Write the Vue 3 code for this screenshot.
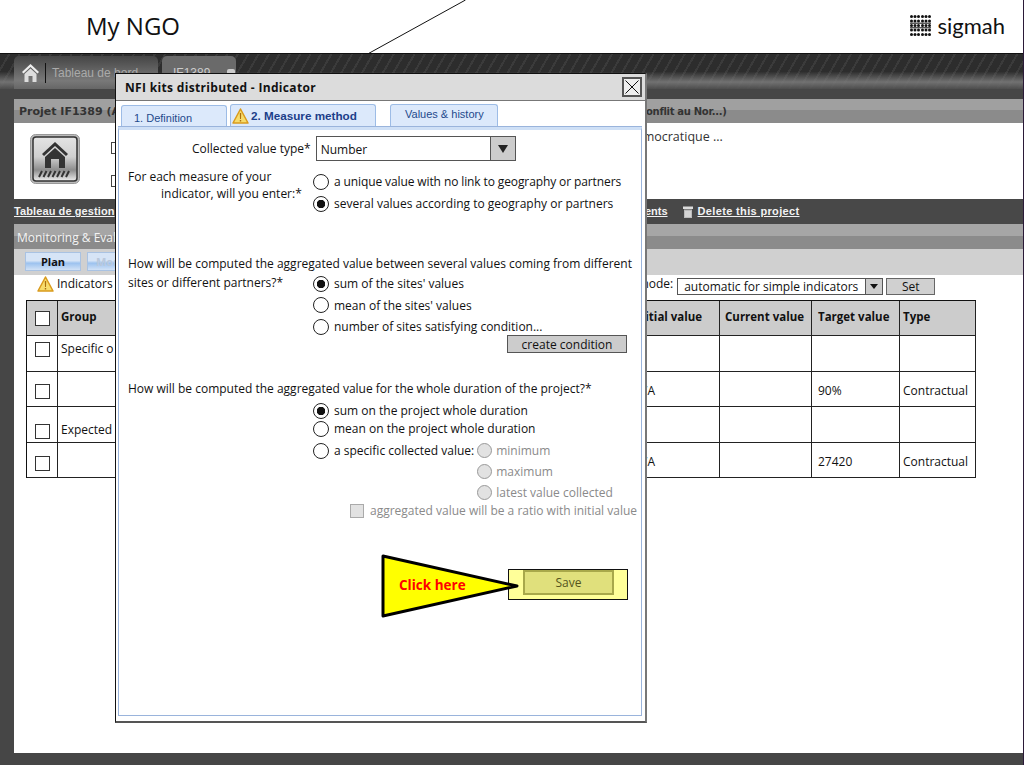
<script setup>
const columns = ['Group', 'Initial value', 'Current value', 'Target value', 'Type'];

const rows = [
  { group: 'Specific o', initial: '', target: '', type: '', top: 4, boxTop: 6 },
  { group: '', initial: 'N/A', target: '90%', type: 'Contractual', top: 10, boxTop: 12 },
  { group: 'Expected', initial: '', target: '', type: '', top: 14, boxTop: 17 },
  { group: '', initial: 'N/A', target: '27420', type: 'Contractual', top: 10, boxTop: 13 },
];

const entryOptions = [
  { label: 'a unique value with no link to geography or partners', checked: false },
  { label: 'several values according to geography or partners', checked: true },
];

const siteOptions = [
  { label: "sum of the sites' values", checked: true },
  { label: "mean of the sites' values", checked: false },
  { label: 'number of sites satisfying condition...', checked: false },
];

const durationOptions = [
  { label: 'sum on the project whole duration', checked: true },
  { label: 'mean on the project whole duration', checked: false },
];

const specificOptions = ['minimum', 'maximum', 'latest value collected'];

const logoCols = [1.5, 5, 8.5, 12.5, 16, 19.5];
const logoRows = [1.5, 6, 10.5, 15, 19.5];
</script>

<template>
  <div class="page">
    <header class="top">
      <div class="ngo">My NGO</div>
      <div class="logo">
        <svg width="21" height="21" viewBox="0 0 21 21">
          <g fill="#111">
            <template v-for="x in logoCols" :key="x">
              <circle v-for="y in logoRows" :key="y" :cx="x" :cy="y" r="1.500" />
            </template>
          </g>
          <path d="M0 8.200h21M0 12.800h21" stroke="#111" stroke-width="1" />
        </svg>
        <span>sigmah</span>
      </div>
    </header>

    <nav class="nav">
      <div class="nav-tab home-tab">
        <svg width="17" height="18" viewBox="0 0 17 18">
          <path d="M8.500 0 0 8l1.500 1.500 7-6.500 7 6.500L17 8z" fill="#eee" />
          <path d="M2.500 10 8.500 4.500 14.500 10v8H10.500v-6h-4v6h-4z" fill="#ddd" />
        </svg>
        <i class="nav-sep"></i>
        <span>Tableau de bord</span>
      </div>
      <div class="nav-tab project-tab">
        <span>IF1389</span>
        <i class="tab-x"></i>
      </div>
    </nav>

    <main class="content">
      <div class="project-title">
        <span class="title-start">Projet IF1389 (Ai</span>
        <span class="title-end">onflit au Nor...)</span>
      </div>

      <section class="project-info">
        <svg class="project-icon" width="50" height="50" viewBox="0 0 50 50">
          <defs>
            <linearGradient id="iconBg" x1="0" y1="0" x2="0" y2="1">
              <stop offset="0" stop-color="#e4e4e4" />
              <stop offset="0.45" stop-color="#d0d0d0" />
              <stop offset="0.75" stop-color="#8d8d8d" />
              <stop offset="1" stop-color="#eee" />
            </linearGradient>
          </defs>
          <rect x="0.500" y="0.500" width="49" height="49" rx="5" fill="#bbb" stroke="#999" />
          <rect x="3" y="3" width="44" height="44" rx="3" fill="url(#iconBg)" stroke="#333" stroke-width="1.500" />
          <path d="M25 8 12 20l2 2 11-10 11 10 2-2z" fill="#333" />
          <path d="M15 23 25 14l10 9v11H29V25h-8v9h-6z" fill="#333" />
          <path d="M9 43l3-6M13.500 43l3-6M18 43l3-6M22.500 43l3-6M27 43l3-6M31.500 43l3-6M36 43l3-6" stroke="#333" stroke-width="2" />
        </svg>
        <div class="info-labels">
          <i></i>
          <i></i>
        </div>
        <div class="info-text">démocratique ...</div>
      </section>

      <div class="links">
        <a class="gestion-link">Tableau de gestion</a>
        <a class="docs-link">Documents</a>
        <svg class="trash" width="12" height="13" viewBox="0 0 12 13">
          <path d="M1 1.500h10v2.500H1z" fill="#ddd" />
          <path d="M2 4.500h8V13H2z" fill="#bbb" />
          <path d="M4 6v6M6 6v6M8 6v6" stroke="#eee" />
        </svg>
        <a class="delete-link">Delete this project</a>
      </div>

      <div class="section-title">Monitoring &amp; Eval</div>

      <div class="toolbar">
        <button class="tool-btn active">Plan</button>
        <button class="tool-btn second">Mon</button>
      </div>

      <div class="monitor">
        <div class="filter-row">
          <svg class="warn" width="17" height="16" viewBox="0 0 17 16">
            <path d="M8.500 1 16 15H1z" fill="#f7dc6c" stroke="#d99a1c" stroke-width="1.500" stroke-linejoin="round" />
            <path d="M7.800 5h1.400l-.2 6H8zM7.800 12h1.400v1.500H7.800z" fill="#a96f10" />
          </svg>
          <span class="ind-label">Indicators</span>
          <span class="mode-label">mode:</span>
          <div class="mini-select">
            <span>automatic for simple indicators</span>
            <b></b>
          </div>
          <button class="set-btn">Set</button>
        </div>

        <div class="grid">
          <div class="cell head check-cell"><i class="box"></i></div>
          <div class="cell head" v-for="c in columns" :key="c">{{ c }}</div>
          <template v-for="(r, i) in rows" :key="i">
            <div class="cell check-cell" :style="{ paddingTop: r.boxTop + 'px' }"><i class="box"></i></div>
            <div class="cell" :style="{ paddingTop: r.top + 'px' }">{{ r.group }}</div>
            <div class="cell" :style="{ paddingTop: r.top + 'px' }">{{ r.initial }}</div>
            <div class="cell"></div>
            <div class="cell" :style="{ paddingTop: r.top + 'px' }">{{ r.target }}</div>
            <div class="cell" :style="{ paddingTop: r.top + 'px' }">{{ r.type }}</div>
          </template>
        </div>
      </div>
    </main>

    <svg class="pointer-line" width="110" height="54" viewBox="0 0 110 54">
      <path d="M104.500 0 7.500 53.500" stroke="#111" fill="none" />
    </svg>

    <div class="modal">
      <div class="modal-title">
        <span>NFI kits distributed - Indicator</span>
        <button class="close">
          <svg width="16" height="16" viewBox="0 0 16 16">
            <path d="M1.500 1.500l13 13M14.500 1.500l-13 13" stroke="#111" fill="none" />
          </svg>
        </button>
      </div>

      <div class="tabs">
        <div class="tab first">1. Definition</div>
        <div class="tab current">
          <svg width="17" height="16" viewBox="0 0 17 16">
            <path d="M8.500 1 16 15H1z" fill="#f7dc6c" stroke="#d99a1c" stroke-width="1.500" stroke-linejoin="round" />
            <path d="M7.800 5h1.400l-.2 6H8zM7.800 12h1.400v1.500H7.800z" fill="#a96f10" />
          </svg>
          <span>2. Measure method</span>
        </div>
        <div class="tab last">Values &amp; history</div>
      </div>

      <div class="panel">
        <div class="type-row">
          <label>Collected value type*</label>
          <div class="type-select">
            <span>Number</span>
            <b></b>
          </div>
        </div>

        <div class="entry-row">
          <div class="entry-label">
            <div>For each measure of your</div>
            <div class="entry-second">indicator, will you enter:*</div>
          </div>
          <div class="options tight">
            <div class="radio" v-for="o in entryOptions" :key="o.label">
              <i class="dot" :class="{ on: o.checked }"></i>{{ o.label }}
            </div>
          </div>
        </div>

        <p class="question q-sites">How will be computed the aggregated value between several values coming from different</p>
        <div class="sites-row">
          <div class="sites-label">sites or different partners?*</div>
          <div class="options site-options">
            <div class="radio" v-for="o in siteOptions" :key="o.label">
              <i class="dot" :class="{ on: o.checked }"></i>{{ o.label }}
            </div>
          </div>
        </div>
        <div class="condition-row">
          <button class="gray-btn">create condition</button>
        </div>

        <p class="question q-duration">How will be computed the aggregated value for the whole duration of the project?*</p>
        <div class="options duration">
          <div class="radio short" v-for="o in durationOptions" :key="o.label">
            <i class="dot" :class="{ on: o.checked }"></i>{{ o.label }}
          </div>
          <div class="specific">
            <div class="radio"><i class="dot"></i>a specific collected value:</div>
            <div class="sub-options">
              <div class="radio disabled" v-for="s in specificOptions" :key="s">
                <i class="dot"></i>{{ s }}
              </div>
            </div>
          </div>
        </div>
        <div class="ratio-row">
          <i class="box disabled-box"></i>
          <span>aggregated value will be a ratio with initial value</span>
        </div>
      </div>

      <div class="callout">
        <svg class="callout-arrow" width="140" height="64" viewBox="0 0 140 64">
          <path d="M2 2 136 32 2 62z" fill="#ff0" stroke="#000" stroke-width="3" stroke-linejoin="round" />
        </svg>
        <span class="callout-text">Click here</span>
        <div class="save-mark">
          <button class="save">Save</button>
        </div>
      </div>
    </div>
  </div>
</template>

<style scoped>
.page {
  position: relative;
  width: 1023px;
  height: 765px;
  display: flex;
  flex-direction: column;
  border-right: 1px solid #2b1a38;
  overflow: hidden;
  font-family: "Open Sans", sans-serif;
  color: #111;
}

i {
  display: block;
  font-style: normal;
}

.top {
  height: 53px;
  flex-shrink: 0;
  display: flex;
  justify-content: space-between;
  align-items: flex-start;
  padding-left: 86px;
  padding-right: 18px;
  background: #fff;
  border-bottom: 1px solid #111;
}

.ngo {
  margin-top: 8px;
  font-size: 24px;
  line-height: 36px;
}

.logo {
  display: flex;
  align-items: center;
  gap: 6px;
  margin-top: 15px;
  font-family: Lato, sans-serif;
  font-size: 22px;
  line-height: 21px;
}

.nav {
  height: 35px;
  flex-shrink: 0;
  display: flex;
  align-items: flex-end;
  gap: 4px;
  padding-left: 14px;
  background:
    linear-gradient(180deg, rgba(60, 60, 60, 0) 50%, rgba(125, 125, 125, 0.85) 80%, rgba(80, 80, 80, 0.9) 100%),
    repeating-linear-gradient(120deg, #2d2d2d 0 7px, #3b3b3b 7px 9px);
}

.nav-tab {
  height: 33px;
  box-sizing: border-box;
  display: flex;
  align-items: center;
  border-radius: 5px 5px 0 0;
  font-family: "Liberation Sans", sans-serif;
  font-size: 12px;
}

.home-tab {
  width: 144px;
  padding-left: 8px;
  color: #aaa;
  background:
    linear-gradient(180deg, rgba(70, 70, 70, 0.6), rgba(130, 130, 130, 0.85) 75%, #666),
    #444;
}

.nav-sep {
  width: 1px;
  height: 20px;
  margin: 0 6px;
  background: #111;
}

.project-tab {
  width: 74px;
  padding-left: 11px;
  color: #ccc;
  background: #6a6a6a;
}

.tab-x {
  width: 8px;
  height: 7px;
  margin-left: 17px;
  border-radius: 2px;
  background: #ccc;
}

.content {
  flex: 1;
  display: flex;
  flex-direction: column;
  padding: 10px 0 12px 14px;
  background: #464646;
}

.project-title {
  height: 24px;
  flex-shrink: 0;
  display: flex;
  align-items: center;
  padding: 1px 0 0 5px;
  box-sizing: border-box;
  background: linear-gradient(180deg, #a0a0a0 0 11px, #8b8b8b 11px);
  color: #333;
  font-family: "DejaVu Sans", sans-serif;
  font-size: 11px;
  font-weight: 700;
  white-space: nowrap;
}

.title-start {
  width: 96px;
}

.title-end {
  margin-left: 531px;
  font-size: 10px;
  letter-spacing: -0.3px;
}

.project-info {
  height: 76px;
  flex-shrink: 0;
  display: flex;
  background: #fff;
}

.project-icon {
  margin: 11px 0 0 16px;
}

.info-labels {
  margin: 19px 0 0 31px;
  width: 20px;
}

.info-labels i {
  width: 5px;
  height: 10px;
  margin-bottom: 21px;
  border: 1px solid #444;
}

.info-text {
  margin: 5px 0 0 497px;
  font-size: 12.500px;
  color: #333;
  white-space: nowrap;
}

.links {
  height: 25px;
  flex-shrink: 0;
  display: flex;
  align-items: center;
  padding-bottom: 1px;
  box-sizing: border-box;
  background: #484848;
  color: #f2f2f2;
  font-family: "Liberation Sans", sans-serif;
  font-size: 11px;
  font-weight: 700;
}

.links a {
  text-decoration: underline;
  white-space: nowrap;
}

.gestion-link {
  letter-spacing: 0.1px;
}

.docs-link {
  margin-left: 493px;
}

.trash {
  margin: 0 4px 0 14px;
}

.delete-link {
  letter-spacing: 0.35px;
}

.section-title {
  height: 25px;
  flex-shrink: 0;
  padding-left: 3px;
  background: linear-gradient(180deg, #a6a6a6 0 12px, #8b8b8b 12px);
  color: #f4f4f4;
  font-size: 12px;
  line-height: 27px;
}

.toolbar {
  height: 26px;
  box-sizing: border-box;
  flex-shrink: 0;
  display: flex;
  gap: 6px;
  padding: 3px 0 0 11px;
  background: #d0d0d0;
}

.tool-btn {
  width: 56px;
  height: 19px;
  padding: 0;
  border: 1px solid #a9c2e2;
  background: linear-gradient(180deg, #d6e4f6 0 45%, #9cc2ef 60%, #d2e2f6);
  font-family: "Open Sans", sans-serif;
  font-size: 11px;
  font-weight: 700;
  color: #111;
}

.second {
  text-align: left;
  padding-left: 8px;
  color: #b9c8dc;
}

.monitor {
  flex: 1;
  background: #fff;
  padding-left: 12px;
}

.filter-row {
  height: 25px;
  display: flex;
  align-items: flex-start;
  font-size: 12px;
  line-height: 18px;
}

.warn {
  margin: 1px 0 0 11px;
}

.ind-label {
  margin-left: 3px;
}

.mode-label {
  margin-left: 525px;
}

.mini-select {
  width: 206px;
  height: 17px;
  margin: 3px 0 0 4px;
  box-sizing: border-box;
  display: flex;
  justify-content: space-between;
  border: 1px solid #555;
  padding-left: 6px;
  line-height: 15px;
  font-size: 12px;
}

.mini-select b {
  width: 16px;
  background: #ccc;
  border-left: 1px solid #555;
  position: relative;
}

.mini-select b::after {
  content: "";
  position: absolute;
  left: 4px;
  top: 5px;
  border: 4px solid transparent;
  border-top: 5px solid #111;
}

.set-btn {
  width: 49px;
  height: 17px;
  margin: 3px 0 0 3px;
  padding: 0;
  border: 1px solid #666;
  background: #d0d0d0;
  font-family: "Open Sans", sans-serif;
  font-size: 12px;
  line-height: 14px;
  color: #111;
}

.grid {
  width: 950px;
  box-sizing: border-box;
  display: grid;
  grid-template-columns: 31px 573px 89px 92px 88px 76px;
  grid-auto-rows: 35.400px;
  border-top: 1px solid #111;
  border-left: 1px solid #111;
  font-size: 12px;
}

.cell {
  box-sizing: border-box;
  padding: 3px 0 0 3px;
  border-right: 1px solid #222;
  border-bottom: 1px solid #222;
  white-space: nowrap;
  overflow: hidden;
}

.head {
  padding: 8px 0 0 3px;
  background: #ccc;
  font-size: 11.500px;
  font-weight: 700;
}

.cell:nth-child(6n+4) {
  padding-left: 5px;
}

.cell:nth-child(6n+5) {
  padding-left: 6px;
}

.check-cell {
  padding: 6px 0 0 8px;
}

.head.check-cell {
  padding-top: 10px;
}

.box {
  width: 13px;
  height: 13px;
  border: 1px solid #333;
  background: #fff;
}

.pointer-line {
  position: absolute;
  left: 361px;
  top: 0;
}

/* dialog lies over the page */
.modal {
  position: absolute;
  left: 115px;
  top: 73px;
  width: 529px;
  height: 647px;
  display: flex;
  flex-direction: column;
  background: #fff;
  border: 1px solid #111;
  border-right: 2px solid #777;
  border-bottom: 2px solid #555;
  font-size: 12px;
}

.modal-title {
  height: 26px;
  flex-shrink: 0;
  display: flex;
  justify-content: space-between;
  align-items: center;
  padding: 0 3px 0 9px;
  background: #dcdcdc;
  border-bottom: 1px solid #777;
  font-size: 12px;
  font-weight: 700;
  letter-spacing: 0.33px;
}

.close {
  width: 20px;
  height: 20px;
  padding: 0;
  display: flex;
  align-items: center;
  justify-content: center;
  border: 2px solid #555;
  background: #eee;
}

.tabs {
  height: 26px;
  flex-shrink: 0;
  display: flex;
  align-items: flex-end;
  padding-left: 5px;
  font-family: "Liberation Sans", sans-serif;
  font-size: 11px;
  color: #1f4a8c;
}

.tab {
  box-sizing: border-box;
  height: 23px;
  border: 1px solid #9dbce6;
  border-bottom: none;
  border-radius: 3px 3px 0 0;
  background: #dce9fb;
  white-space: nowrap;
}

.first {
  width: 106px;
  height: 22px;
  padding: 6px 0 0 12px;
}

.current {
  width: 146px;
  margin-left: 3px;
  display: flex;
  align-items: flex-start;
  gap: 2px;
  padding: 3px 0 0 1px;
  font-size: 11.700px;
  font-weight: 700;
  color: #1c3f8a;
}

.current span {
  padding-top: 1px;
}

.last {
  width: 108px;
  margin-left: 14px;
  padding: 3px 0 0 14px;
}

.panel {
  flex: 1;
  margin: 0 3px 5px 2px;
  padding-left: 9px;
  border: 1px solid #9ab4dc;
  border-top: 3px solid #cfe0f6;
  box-shadow: 0 -1px 0 #9ab4dc;
  white-space: nowrap;
}

.type-row {
  display: flex;
  align-items: center;
  height: 25px;
  margin-top: 6px;
  padding-left: 64px;
}

.type-select {
  width: 200px;
  height: 25px;
  box-sizing: border-box;
  margin-left: 5px;
  display: flex;
  justify-content: space-between;
  border: 1px solid #555;
  padding-left: 4px;
  line-height: 25px;
}

.type-select b {
  width: 24px;
  background: #ccc;
  border-left: 1px solid #555;
  position: relative;
}

.type-select b::after {
  content: "";
  position: absolute;
  left: 7px;
  top: 8px;
  border: 5px solid transparent;
  border-top: 8px solid #222;
}

.entry-row {
  display: flex;
  margin-top: 6px;
}

.entry-label {
  width: 185px;
  line-height: 17px;
  padding-top: 1px;
}

.entry-second {
  padding-left: 33px;
}

.options {
  display: flex;
  flex-direction: column;
  gap: 5px;
}

.tight {
  margin-top: 6px;
}

.tight .radio:first-child {
  letter-spacing: -0.11px;
}

.site-options {
  margin-top: 1px;
  gap: 4.500px;
}

.radio {
  display: flex;
  align-items: center;
  gap: 5px;
  height: 17px;
  line-height: 17px;
}

.dot {
  box-sizing: border-box;
  width: 16px;
  height: 16px;
  flex-shrink: 0;
  border: 1.500px solid #222;
  border-radius: 50%;
  background: #fff;
}

.dot.on {
  background: radial-gradient(circle, #111 0 4px, #fff 4.500px);
}

.question {
  margin: 0;
  line-height: 17px;
}

.q-sites {
  margin-top: 43px;
}

.sites-row {
  display: flex;
  margin-top: 2px;
}

.sites-label {
  width: 185px;
  line-height: 17px;
}

.condition-row {
  padding-left: 379px;
}

.gray-btn {
  width: 120px;
  height: 18px;
  padding: 0;
  border: 1px solid #555;
  background: #ccc;
  font-family: "Open Sans", sans-serif;
  font-size: 12px;
  line-height: 15px;
  color: #111;
}

.q-duration {
  margin-top: 27px;
}

.duration {
  margin: 5px 0 0 185px;
  gap: 1px;
}

.specific {
  display: flex;
  margin-top: 4px;
}

.sub-options {
  margin-left: 3px;
  display: flex;
  flex-direction: column;
  gap: 4px;
}

.disabled {
  gap: 4px;
  color: #8a8a8a;
}

.disabled .dot {
  width: 15px;
  height: 15px;
  border-color: #999;
  background: #e2e2e2;
}

.ratio-row {
  display: flex;
  align-items: center;
  gap: 6px;
  height: 17px;
  margin: 1px 0 0 222px;
  color: #8a8a8a;
}

.disabled-box {
  width: 14px;
  height: 14px;
  box-sizing: border-box;
  border-color: #aaa;
  background: #e2e2e2;
}

.callout {
  position: absolute;
  left: 265px;
  top: 480px;
  width: 248px;
  height: 64px;
}

.callout-arrow {
  position: absolute;
  left: 0;
  top: 0;
  z-index: 1;
}

.callout-text {
  position: absolute;
  z-index: 2;
  left: 18px;
  top: 22px;
  color: #f00;
  font-size: 13.500px;
  font-weight: 700;
}

.save-mark {
  position: absolute;
  left: 127px;
  top: 15px;
  width: 120px;
  height: 31px;
  box-sizing: border-box;
  padding-left: 14px;
  background: #ffff99;
  border: 1px solid #111;
}

.save {
  display: block;
  width: 91px;
  height: 25px;
  padding: 0;
  border: 2px solid #a8a84a;
  background: #e0e07c;
  font-family: "Open Sans", sans-serif;
  font-size: 12px;
  color: #55551c;
}
</style>

<style>
html,
body {
  background: #fff;
}
</style>
